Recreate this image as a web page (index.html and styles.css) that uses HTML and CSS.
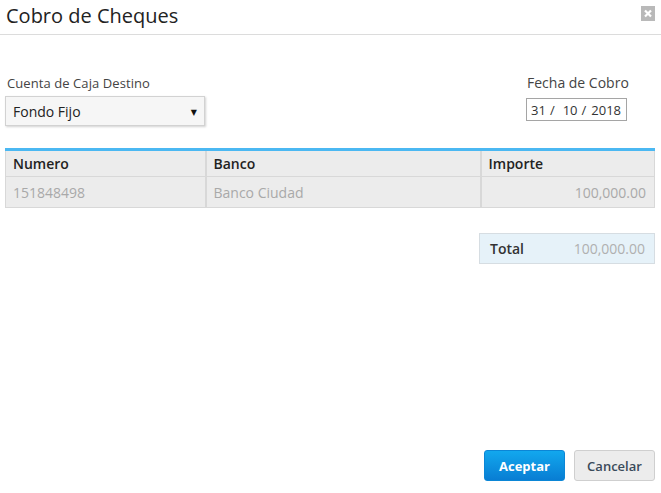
FILE: index.html
```html
<!DOCTYPE html>
<html lang="es">
<head>
<meta charset="utf-8">
<title>Cobro de Cheques</title>
<link rel="stylesheet" href="styles.css">
</head>
<body>
<div class="dialog">
  <header class="dlg-head">
    <h1 class="dlg-title">Cobro de Cheques</h1>
    <span class="close-btn" aria-label="Cerrar">
      <svg width="14" height="15" viewBox="0 0 14 15"><rect width="14" height="15" fill="#b9b9b9"/><path d="M4 4.5 L10 10.5 M10 4.5 L4 10.5" stroke="#fff" stroke-width="2.2"/></svg>
    </span>
  </header>

  <div class="fields">
    <div class="field">
      <label class="lbl">Cuenta de Caja Destino</label>
      <div class="select"><span>Fondo Fijo</span><span class="caret">▼</span></div>
    </div>
    <div class="field field-date">
      <label class="lbl">Fecha de Cobro</label>
      <div class="date"><span>31</span><span class="sep sep1">/</span><span>10</span><span class="sep">/</span><span>2018</span></div>
    </div>
  </div>

  <table class="grid">
    <thead>
      <tr><th class="c1">Numero</th><th class="c2">Banco</th><th class="c3">Importe</th></tr>
    </thead>
    <tbody>
      <tr><td>151848498</td><td>Banco Ciudad</td><td class="num">100,000.00</td></tr>
    </tbody>
  </table>

  <div class="total-row">
    <div class="total"><span class="t-lbl">Total</span><span class="t-val">100,000.00</span></div>
  </div>

  <div class="actions">
    <button class="btn btn-primary">Aceptar</button>
    <button class="btn btn-default">Cancelar</button>
  </div>
</div>
</body>
</html>
```

FILE: styles.css
```css
* { box-sizing: border-box; }
html, body { margin: 0; padding: 0; background: #fff; }
body { font-family: "Open Sans", "DejaVu Sans", sans-serif; color: #333; width: 661px; height: 493px; overflow: hidden; }

.dialog { display: flex; flex-direction: column; height: 493px; }

.dlg-head {
  height: 35px;
  border-bottom: 1px solid #dcdcdc;
  display: flex;
  justify-content: space-between;
  align-items: flex-start;
  padding: 0 6px 0 6px;
}
.dlg-title { margin: 3px 0 0 0; font-size: 20px; font-weight: 400; color: #222; line-height: 26px; }
.close-btn { display: block; margin-top: 6px; line-height: 0; }

.fields {
  display: flex;
  justify-content: space-between;
  padding: 39px 31px 0 5px;
}
.lbl { display: block; font-size: 13px; color: #444; line-height: 18px; margin-left: 2px; letter-spacing: 0.08px; }
.select {
  margin-top: 4px;
  width: 200px;
  height: 30px;
  background: #f6f6f6;
  border: 1px solid #d2d2d2;
  box-shadow: 1px 1px 2px rgba(0,0,0,0.18);
  display: flex;
  align-items: center;
  justify-content: space-between;
  padding: 0 7px 0 7px;
  font-size: 14px;
  color: #222;
}
.caret { font-size: 8px; color: #111; }

.field-date { width: 104px; }
.field-date .lbl { margin-left: 1px; font-size: 14px; letter-spacing: 0; white-space: nowrap; }
.date {
  margin-top: 6px;
  width: 101px;
  height: 23px;
  border: 1px solid #a5a5a5;
  display: flex;
  align-items: center;
  padding-left: 4px;
  font-size: 13px;
  color: #333;
}
.date .sep { margin: 0 5px 0 4px; }
.date .sep1 { margin: 0 8px 0 4px; }

.grid {
  margin: 22px 6px 0 5px;
  width: 650px;
  border-collapse: collapse;
  border-top: 3px solid #4bb8f2;
  font-size: 14px;
}
.grid th, .grid td {
  background: #ececec;
  border: 1px solid #d8d8d8;
  border-left-width: 2px;
  border-right-width: 2px;
  text-align: left;
  padding: 0 7px;
}
.grid th:first-child, .grid td:first-child { border-left-width: 1px; }
.grid th:last-child, .grid td:last-child { border-right-width: 1px; }
.grid th { height: 27px; font-weight: 600; color: #222; border-top: 0; }
.grid td { height: 31px; color: #a9a9a9; }
.grid td.num { text-align: right; padding-right: 8px; }
.c1 { width: 200px; }
.c2 { width: 275px; }

.total-row { display: flex; justify-content: flex-end; padding: 25px 6px 0 0; }
.total {
  width: 176px;
  height: 31px;
  background: #e6f2f9;
  border: 1px solid #d6dde2;
  display: flex;
  align-items: center;
  justify-content: space-between;
  padding: 0 9px 0 10px;
  font-size: 14px;
}
.t-lbl { font-weight: 600; color: #333; }
.t-val { color: #b0b0b0; }

.actions { margin-top: auto; display: flex; justify-content: flex-end; gap: 9px; padding: 0 6px 12px 0; }
.btn {
  width: 81px;
  height: 31px;
  border-radius: 3px;
  font-family: "Open Sans", sans-serif;
  font-size: 13px;
  cursor: pointer;
}
.btn-primary {
  background: linear-gradient(#12a8ee, #087dd3);
  border: 1px solid #0b86d6;
  color: #fff;
  font-weight: 700;
}
.btn-default {
  background: #ececec;
  border: 1px solid #cfcfcf;
  color: #3a4a5a;
  font-weight: 600;
}
```
